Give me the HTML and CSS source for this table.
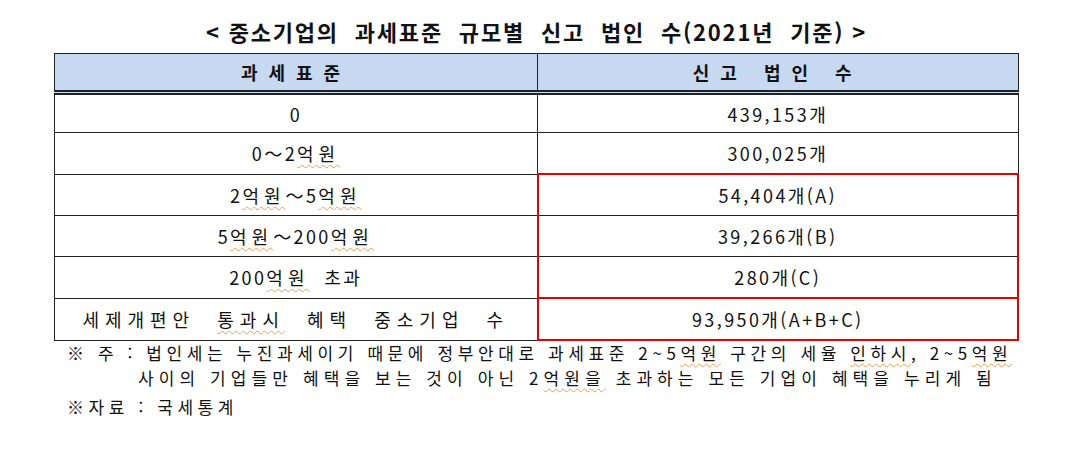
FILE: index.html
```html
<!DOCTYPE html>
<html lang="ko">
<head>
<meta charset="utf-8">
<link rel="stylesheet" href="styles.css">
</head>
<body>
<div class="page">
  <h1 class="title">&lt; 중소기업의&nbsp; 과세표준&nbsp; 규모별&nbsp; 신고&nbsp; 법인&nbsp; 수(2021년&nbsp; 기준) &gt;</h1>
  <table class="data">
    <thead>
      <tr>
        <th class="c1">과세표준</th>
        <th class="c2">신고 법인 수</th>
      </tr>
    </thead>
    <tbody>
      <tr class="r-first">
        <td>0</td>
        <td>439,153개</td>
      </tr>
      <tr>
        <td>0～2<span class="sp">억원</span></td>
        <td>300,025개</td>
      </tr>
      <tr>
        <td>2<span class="sp">억원</span>～5<span class="sp">억원</span></td>
        <td class="red red-top">54,404개(A)</td>
      </tr>
      <tr>
        <td>5<span class="sp">억원</span>～200<span class="sp">억원</span></td>
        <td class="red">39,266개(B)</td>
      </tr>
      <tr>
        <td>200<span class="sp">억원</span>&nbsp; 초과</td>
        <td class="red red-bottom">280개(C)</td>
      </tr>
      <tr>
        <td class="wide">세제개편안&nbsp; <span class="sp">통과시</span>&nbsp; 혜택&nbsp; 중소기업&nbsp; 수</td>
        <td class="red red-top red-bottom">93,950개(A+B+C)</td>
      </tr>
    </tbody>
  </table>
  <div class="notes">
    <p class="note first">※ 주 : 법인세는 누진과세이기 때문에 정부안대로 과세표준 2~5<span class="sp">억원</span> 구간의 세율 <span class="sp">인하시</span>, 2~5<span class="sp">억원</span></p>
    <p class="note indent">사이의 기업들만 혜택을 보는 것이 아닌 2<span class="sp">억원을</span> 초과하는 모든 기업이 혜택을 누리게 됨</p>
    <p class="note last">※자료 : 국세통계</p>
  </div>
</div>
</body>
</html>
```

FILE: styles.css
```css
html, body {
  margin: 0;
  padding: 0;
  background: #ffffff;
}

.page {
  width: 965px;
  padding: 16px 0 0 54px;
  font-family: "Noto Sans CJK KR", "Noto Sans", sans-serif;
  color: #111;
}

.title {
  margin: 0 0 6px 0;
  height: 31px;
  line-height: 31px;
  text-align: center;
  font-size: 22px;
  font-weight: 700;
  letter-spacing: 1.8px;
  white-space: nowrap;
}

.data {
  width: 965px;
  border-collapse: collapse;
  table-layout: fixed;
}

.data th,
.data td {
  border: 1px solid #222;
  text-align: center;
  padding: 0;
  white-space: nowrap;
}

.data th {
  background: #c6d9f0;
  height: 36px;
  font-size: 18px;
  font-weight: 700;
  letter-spacing: 11px;
  border-bottom: 5px double #222;
}

.data th.c1 {
  width: 482px;
}

.data td {
  height: 40px;
  font-size: 18px;
  font-weight: 400;
  letter-spacing: 2.4px;
}

.data tr.r-first td {
  height: 37px;
}

.data td .sp {
  letter-spacing: 5px;
}

.data td.wide,
.data td.wide .sp {
  letter-spacing: 6px;
}

.data td.red {
  border-left: 2px solid #e60000;
  border-right: 2px solid #e60000;
}

.data td.red-top {
  border-top: 2px solid #e60000;
}

.data td.red-bottom {
  border-bottom: 2px solid #e60000;
}

.sp {
  text-decoration: underline wavy #e8a050;
  text-decoration-thickness: 1px;
  text-underline-offset: 3px;
}

.notes {
  padding: 0 0 0 13px;
}

.note {
  margin: 0;
  height: 25px;
  line-height: 25px;
  font-size: 17px;
  letter-spacing: 4.6px;
  white-space: nowrap;
}

.note.first {
  height: 24px;
  line-height: 24px;
}

.note.indent {
  padding-left: 71px;
  letter-spacing: 5.1px;
}

.note.last {
  height: 29px;
  line-height: 33px;
}
```
